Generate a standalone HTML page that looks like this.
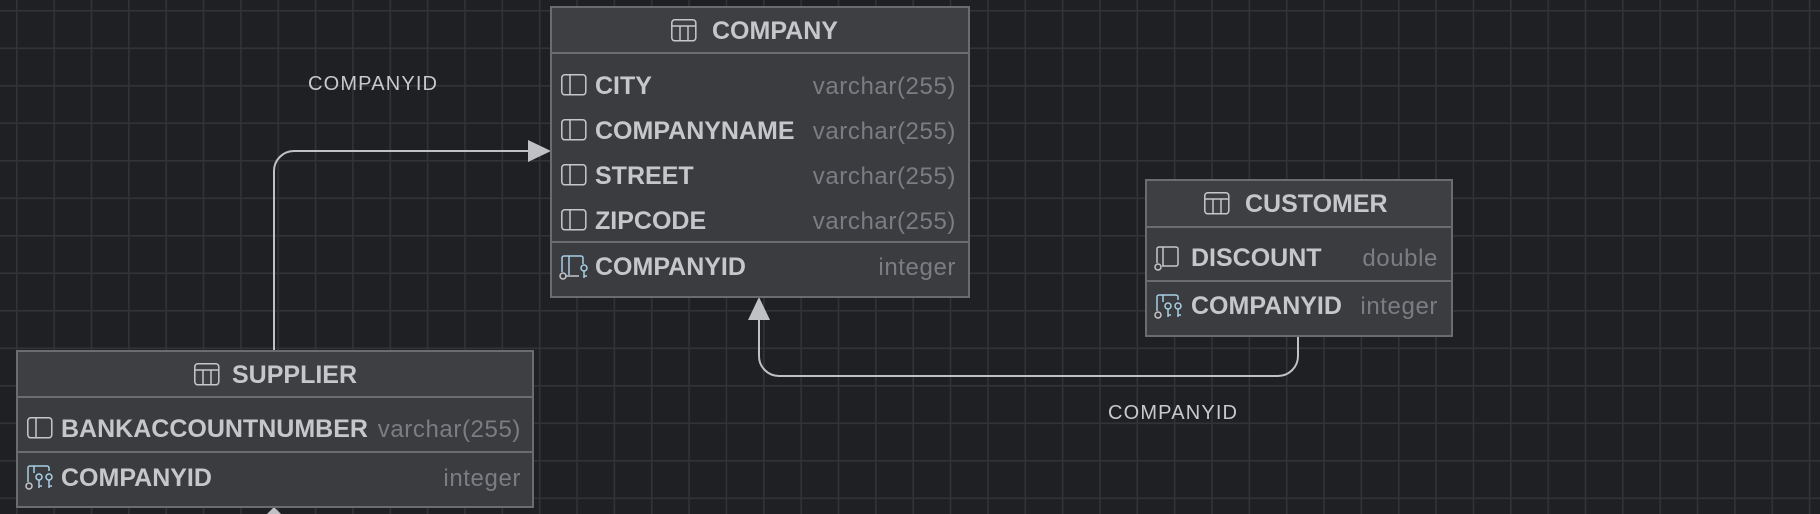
<!DOCTYPE html>
<html><head><meta charset="utf-8"><style>
html,body{margin:0;padding:0;background:#1f2023;}
svg{display:block}
text{font-family:"Liberation Sans",sans-serif;}
.n{font-weight:bold;font-size:25px;fill:#c6c7cb}
.t{font-size:24px;fill:#7b7d82;letter-spacing:0.6px}
.h{font-weight:bold;font-size:25px;fill:#c6c7cb}
.l{font-size:20px;fill:#c8c9cc}
</style></head><body>
<svg width="1820" height="514" viewBox="0 0 1820 514" xmlns="http://www.w3.org/2000/svg">
<defs>
<pattern id="g" x="16" y="10" width="37.35" height="37.5" patternUnits="userSpaceOnUse">
<rect width="37.35" height="37.5" fill="#1f2023"/>
<rect x="0" y="0" width="1.6" height="37.5" fill="#323336"/>
<rect x="0" y="0" width="37.35" height="1.6" fill="#323336"/>
</pattern>
<g id="col"><rect x="0.8" y="0.8" width="24" height="20" rx="3" fill="none" stroke="#c6c7cb" stroke-width="1.5"/><line x1="9" y1="1" x2="9" y2="21" stroke="#c6c7cb" stroke-width="1.5"/></g>
<g id="tbl"><rect x="0.8" y="0.8" width="24" height="21" rx="3" fill="none" stroke="#c6c7cb" stroke-width="1.5"/><line x1="1" y1="7" x2="25" y2="7" stroke="#c6c7cb" stroke-width="1.5"/><line x1="9" y1="7" x2="9" y2="22" stroke="#c6c7cb" stroke-width="1.5"/><line x1="17" y1="7" x2="17" y2="22" stroke="#c6c7cb" stroke-width="1.5"/></g>
<g id="fk" fill="none" stroke-width="1.5">
<path d="M3 17 V3 a2 2 0 0 1 2 -2 H22 a2 2 0 0 1 2 2 V9" stroke="#a8cfe6"/>
<line x1="10" y1="1" x2="10" y2="20" stroke="#a8cfe6"/>
<circle cx="4" cy="21" r="3" stroke="#c6c7cb"/>
<line x1="7" y1="21" x2="20" y2="21" stroke="#c6c7cb"/>
<circle cx="25" cy="13" r="3" stroke="#a8cfe6"/>
<path d="M25 16 V23 M25 21 H28" stroke="#a8cfe6"/>
</g>
<g id="fk2" fill="none" stroke-width="1.5">
<path d="M3 17 V3 a2 2 0 0 1 2 -2 H22 a2 2 0 0 1 2 2 V6" stroke="#a8cfe6"/>
<line x1="9" y1="1" x2="9" y2="8" stroke="#a8cfe6"/>
<circle cx="4" cy="21" r="3" stroke="#c6c7cb"/>
<circle cx="14" cy="12" r="3" stroke="#a8cfe6"/>
<path d="M14 15 V23 M14 21 H17" stroke="#a8cfe6"/>
<circle cx="24" cy="12" r="3" stroke="#a8cfe6"/>
<path d="M24 15 V23 M24 21 H27" stroke="#a8cfe6"/>
</g>
<g id="nul" fill="none" stroke-width="1.5" stroke="#c6c7cb">
<path d="M3 17 V3 a2 2 0 0 1 2 -2 H22 a2 2 0 0 1 2 2 V18 a2 2 0 0 1 -2 2 H8"/>
<line x1="9" y1="1" x2="9" y2="20"/>
<circle cx="4" cy="21" r="3"/>
</g>
</defs>
<rect width="1820" height="514" fill="url(#g)"/>

<g fill="none" stroke="#c0c1c4" stroke-width="2">
<path d="M274 351 V171 a20 20 0 0 1 20 -20 H530"/>
<path d="M1298 336 V356 a20 20 0 0 1 -20 20 H779 a20 20 0 0 1 -20 -20 V316"/>
</g>
<polygon points="528,140 551,151 528,162" fill="#c0c1c4"/>
<polygon points="748,320 759,297 770,320" fill="#c0c1c4"/>
<polygon points="267,514 274,507 281,514" fill="#c0c1c4"/>
<text class="l" x="308" y="90" textLength="129">COMPANYID</text>
<text class="l" x="1108" y="419" textLength="129">COMPANYID</text>

<!-- COMPANY -->
<rect x="551" y="7" width="418" height="290" fill="#3b3c3f" stroke="#6b6c6f" stroke-width="2"/>
<rect x="552" y="8" width="416" height="45" fill="#3e3f42"/>
<line x1="551" y1="53" x2="969" y2="53" stroke="#6b6c6f" stroke-width="2"/>
<line x1="551" y1="242" x2="969" y2="242" stroke="#6b6c6f" stroke-width="2"/>
<use href="#tbl" x="671" y="19"/>
<text class="h" x="712" y="39">COMPANY</text>
<use href="#col" x="561" y="74"/><text class="n" x="595" y="94">CITY</text><text class="t" x="956" y="94" text-anchor="end">varchar(255)</text>
<use href="#col" x="561" y="119"/><text class="n" x="595" y="139">COMPANYNAME</text><text class="t" x="956" y="139" text-anchor="end">varchar(255)</text>
<use href="#col" x="561" y="164"/><text class="n" x="595" y="184">STREET</text><text class="t" x="956" y="184" text-anchor="end">varchar(255)</text>
<use href="#col" x="561" y="209"/><text class="n" x="595" y="229">ZIPCODE</text><text class="t" x="956" y="229" text-anchor="end">varchar(255)</text>
<use href="#fk" x="559" y="255"/><text class="n" x="595" y="275">COMPANYID</text><text class="t" x="956" y="275" text-anchor="end">integer</text>

<!-- CUSTOMER -->
<rect x="1146" y="180" width="306" height="156" fill="#3b3c3f" stroke="#6b6c6f" stroke-width="2"/>
<rect x="1147" y="181" width="304" height="46" fill="#3e3f42"/>
<line x1="1146" y1="227" x2="1452" y2="227" stroke="#6b6c6f" stroke-width="2"/>
<line x1="1146" y1="281" x2="1452" y2="281" stroke="#6b6c6f" stroke-width="2"/>
<use href="#tbl" x="1204" y="192"/>
<text class="h" x="1245" y="212">CUSTOMER</text>
<use href="#nul" x="1154" y="246"/><text class="n" x="1191" y="266">DISCOUNT</text><text class="t" x="1438" y="266" text-anchor="end">double</text>
<use href="#fk2" x="1154" y="294"/><text class="n" x="1191" y="314">COMPANYID</text><text class="t" x="1438" y="314" text-anchor="end">integer</text>

<!-- SUPPLIER -->
<rect x="17" y="351" width="516" height="156" fill="#3b3c3f" stroke="#6b6c6f" stroke-width="2"/>
<rect x="18" y="352" width="514" height="45" fill="#3e3f42"/>
<line x1="17" y1="397" x2="533" y2="397" stroke="#6b6c6f" stroke-width="2"/>
<line x1="17" y1="452" x2="533" y2="452" stroke="#6b6c6f" stroke-width="2"/>
<use href="#tbl" x="194" y="363"/>
<text class="h" x="232" y="383">SUPPLIER</text>
<use href="#col" x="27" y="417"/><text class="n" x="61" y="437">BANKACCOUNTNUMBER</text><text class="t" x="521" y="437" text-anchor="end">varchar(255)</text>
<use href="#fk2" x="25" y="465"/><text class="n" x="61" y="486">COMPANYID</text><text class="t" x="521" y="486" text-anchor="end">integer</text>
</svg>
</body></html>
